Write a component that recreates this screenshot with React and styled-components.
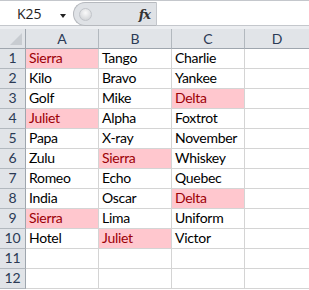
import React from "react";
import styled, { createGlobalStyle } from "styled-components";

const GlobalStyle = createGlobalStyle`
  html, body {
    margin: 0;
    padding: 0;
    background: #fff;
    overflow: hidden;
  }
`;

const rows = [
  ["Sierra", "Tango", "Charlie"],
  ["Kilo", "Bravo", "Yankee"],
  ["Golf", "Mike", "Delta"],
  ["Juliet", "Alpha", "Foxtrot"],
  ["Papa", "X-ray", "November"],
  ["Zulu", "Sierra", "Whiskey"],
  ["Romeo", "Echo", "Quebec"],
  ["India", "Oscar", "Delta"],
  ["Sierra", "Lima", "Uniform"],
  ["Hotel", "Juliet", "Victor"],
  ["", "", ""],
  ["", "", ""],
];

// duplicates get the light red fill
const hot = ["Sierra", "Delta", "Juliet"];

const Window = styled.div`
  width: 309px;
  height: 290px;
  overflow: hidden;
  background: #fff;
`;

const FormulaBar = styled.div`
  display: flex;
  height: 24px;
  border-top: 1px solid #c4c7cc;
  border-bottom: 1px solid #c4c7cc;
  background: #fff;
`;

const NameBox = styled.div`
  width: 73px;
  display: flex;
  align-items: center;
  font-family: "Open Sans", sans-serif;
  font-size: 14px;
  color: #1e1e1e;
  padding-left: 17px;
  box-sizing: border-box;
  position: relative;
`;

const DropArrow = styled.span`
  position: absolute;
  left: 60px;
  top: 13px;
  width: 0;
  height: 0;
  border-left: 3.5px solid transparent;
  border-right: 3.5px solid transparent;
  border-top: 4px solid #222;
`;

const Splitter = styled.div`
  width: 84px;
  margin-top: 1px;
  margin-bottom: -1px;
  display: flex;
  align-items: center;
  justify-content: space-between;
  background: #dfe2e6;
  border: 1px solid #b6b9be;
  border-right-color: #c4c7cc;
  border-radius: 12px 0 0 12px;
  box-sizing: border-box;
  padding: 0 6px 0 5px;
`;

const Knob = styled.span`
  width: 11px;
  height: 11px;
  border-radius: 50%;
  background: radial-gradient(circle at 50% 35%, #fafafa, #c9ccd0);
  border: 1px solid #c2c5ca;
`;

const Fx = styled.span`
  font-family: "DejaVu Serif", "Liberation Serif", serif;
  font-style: italic;
  font-weight: bold;
  font-size: 13px;
  color: #333;
  letter-spacing: -1px;
`;

const FormulaInput = styled.div`
  flex: 1;
  background: #fff;
`;

const Gap = styled.div`
  height: 3px;
  background: #eceef1;
`;

const Grid = styled.div`
  display: grid;
  grid-template-columns: 26px 73px 73px 73px 65px;
  grid-auto-rows: 20px;
`;

const Corner = styled.div`
  background: #e1e4e8;
  border-right: 1px solid #9fa6ae;
  border-bottom: 1px solid #9fa6ae;
  position: relative;
  &::after {
    content: "";
    position: absolute;
    right: 3px;
    bottom: 3px;
    width: 0;
    height: 0;
    border-left: 12px solid transparent;
    border-bottom: 12px solid #c8ccd1;
  }
`;

const ColHead = styled.div`
  background: #e1e4e8;
  border-right: 1px solid #b2b8be;
  border-bottom: 1px solid #9fa6ae;
  display: flex;
  align-items: center;
  justify-content: center;
  font-family: "Lato", sans-serif;
  font-size: 14px;
  color: #2b3a55;
`;

const RowHead = styled.div`
  background: #e1e4e8;
  border-right: 1px solid #9fa6ae;
  border-bottom: 1px solid #b2b8be;
  display: flex;
  align-items: flex-end;
  justify-content: center;
  padding-bottom: 2px;
  box-sizing: border-box;
  font-family: "Lato", sans-serif;
  font-size: 14px;
  color: #2b3a55;
`;

const Cell = styled.div`
  background: ${(p) => (p.$hot ? "#ffc7ce" : "#fff")};
  color: ${(p) => (p.$hot ? "#9c0006" : "#000")};
  border-right: 1px solid #d4d4d4;
  border-bottom: 1px solid #d4d4d4;
  display: flex;
  align-items: flex-end;
  padding: 0 0 2px 3px;
  box-sizing: border-box;
  font-family: "Lato", sans-serif;
  font-size: 14px;
  letter-spacing: -0.3px;
  white-space: nowrap;
`;

export default function App() {
  return (
    <Window>
      <GlobalStyle />
      <FormulaBar>
        <NameBox>
          K25
          <DropArrow />
        </NameBox>
        <Splitter>
          <Knob />
          <Fx>fx</Fx>
        </Splitter>
        <FormulaInput />
      </FormulaBar>
      <Gap />
      <Grid>
        <Corner />
        {["A", "B", "C", "D"].map((c) => (
          <ColHead key={c}>{c}</ColHead>
        ))}
        {rows.map((r, i) => (
          <React.Fragment key={i}>
            <RowHead>{i + 1}</RowHead>
            {r.map((v, j) => (
              <Cell key={j} $hot={hot.includes(v)}>
                {v}
              </Cell>
            ))}
            <Cell />
          </React.Fragment>
        ))}
      </Grid>
    </Window>
  );
}
